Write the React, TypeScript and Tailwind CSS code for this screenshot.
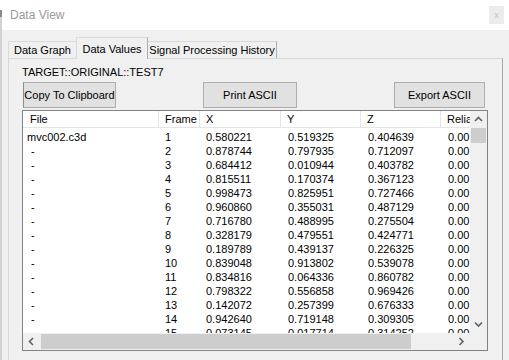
import React from "react";

const rows: [string, string, string, string, string][] = [
  ["mvc002.c3d", "1", "0.580221", "0.519325", "0.404639"],
  ["-", "2", "0.878744", "0.797935", "0.712097"],
  ["-", "3", "0.684412", "0.010944", "0.403782"],
  ["-", "4", "0.815511", "0.170374", "0.367123"],
  ["-", "5", "0.998473", "0.825951", "0.727466"],
  ["-", "6", "0.960860", "0.355031", "0.487129"],
  ["-", "7", "0.716780", "0.488995", "0.275504"],
  ["-", "8", "0.328179", "0.479551", "0.424771"],
  ["-", "9", "0.189789", "0.439137", "0.226325"],
  ["-", "10", "0.839048", "0.913802", "0.539078"],
  ["-", "11", "0.834816", "0.064336", "0.860782"],
  ["-", "12", "0.798322", "0.556858", "0.969426"],
  ["-", "13", "0.142072", "0.257399", "0.676333"],
  ["-", "14", "0.942640", "0.719148", "0.309305"],
  ["-", "15", "0.073145", "0.017714", "0.314252"],
];

const Chev = ({ dir }: { dir: "up" | "down" | "left" | "right" }) => {
  const d =
    dir === "up"
      ? "M1 5 L4.5 1.5 L8 5"
      : dir === "down"
      ? "M1 1.5 L4.5 5 L8 1.5"
      : dir === "left"
      ? "M5 1 L1.5 4.5 L5 8"
      : "M1.5 1 L5 4.5 L1.5 8";
  const horiz = dir === "up" || dir === "down";
  return (
    <svg width={horiz ? 9 : 7} height={horiz ? 7 : 9} viewBox={horiz ? "0 0 9 7" : "0 0 7 9"}>
      <path d={d} stroke="#606060" strokeWidth="1.6" fill="none" />
    </svg>
  );
};

export default function App() {
  return (
    <div
      className="w-[509px] h-[360px] bg-[#f0f0f0] flex overflow-hidden text-[11px] text-black"
      style={{ fontFamily: '"Liberation Sans", Arial, sans-serif' }}
    >
      <div className="w-[2px] bg-[#d2d2d2] flex flex-col">
        <div className="h-[10px] bg-white" />
        <div className="h-[7px] bg-[#8a8a8a]" />
      </div>
      <div className="flex-1 flex flex-col">
        {/* title bar */}
        <div className="h-[30px] bg-white flex items-center pl-[8px]">
          <span className="text-[12px] text-[#9a9a9a]">Data View</span>
          <div className="ml-auto mr-[5px] w-[15px] h-[18px] bg-[#ececec] flex items-center justify-center text-[9px] text-[#c4c4c4] leading-none">
            x
          </div>
        </div>
        {/* body */}
        <div className="flex-1 flex flex-col pl-[6px] pr-[6px]">
          {/* tabs */}
          <div className="h-[28px] flex items-end">
            <div className="h-[17px] w-[68px] border-t border-l border-[#d9d9d9] flex items-center justify-center">
              Data Graph
            </div>
            <div className="relative z-10 -mb-px h-[22px] w-[72px] border-t border-l border-r border-[#adadad] border-l-[#d9d9d9] border-t-[#d9d9d9] bg-[#f0f0f0] flex items-start justify-center pt-[3px]">
              Data Values
            </div>
            <div className="h-[17px] w-[129px] border-t border-r border-[#d9d9d9] border-r-[#adadad] flex items-center justify-center">
              Signal Processing History
            </div>
          </div>
          {/* panel */}
          <div className="flex-1 border-t border-l border-r border-[#d9d9d9] border-r-[#a8a8a8] flex flex-col pl-[13px]">
            <div className="mt-[6px] h-[14px] leading-[14px]">TARGET::ORIGINAL::TEST7</div>
            <div className="mt-[3px] flex h-[26px]">
              <div className="ml-[1px] w-[93px] h-[26px] border border-[#adadad] border-l-[#8c8c8c] bg-[#e1e1e1] flex items-center justify-center">
                Copy To Clipboard
              </div>
              <div className="ml-[87px] w-[94px] h-[26px] border border-[#adadad] bg-[#e1e1e1] flex items-center justify-center">
                Print ASCII
              </div>
              <div className="ml-[97px] w-[91px] h-[26px] border border-[#adadad] bg-[#e1e1e1] flex items-center justify-center">
                Export ASCII
              </div>
            </div>
            {/* list view */}
            <div className="mt-[2px] w-[466px] h-[241px] border border-[#828282] bg-white flex flex-col">
              <div className="h-[222px] flex">
                <div className="w-[447px] overflow-hidden flex flex-col">
                  <div className="h-[17px] flex border-b border-[#e5e5e5] leading-[16px] shrink-0">
                    <div className="w-[136px] shrink-0 border-r border-[#e5e5e5] pl-[7px]">File</div>
                    <div className="w-[41px] shrink-0 border-r border-[#e5e5e5] pl-[6px]">Frame</div>
                    <div className="w-[81px] shrink-0 border-r border-[#e5e5e5] pl-[6px]">X</div>
                    <div className="w-[80px] shrink-0 border-r border-[#e5e5e5] pl-[6px]">Y</div>
                    <div className="w-[80px] shrink-0 border-r border-[#e5e5e5] pl-[6px]">Z</div>
                    <div className="w-[29px] shrink-0 pl-[6px] overflow-hidden whitespace-nowrap">Relia</div>
                  </div>
                  <div className="pt-[2px] flex flex-col">
                    {rows.map((r, i) => (
                      <div key={i} className="h-[14px] leading-[14px] flex shrink-0 whitespace-nowrap">
                        <div className={`w-[136px] shrink-0 ${r[0] === "-" ? "pl-[8px]" : "pl-[4px]"}`}>{r[0]}</div>
                        <div className="w-[41px] shrink-0 pl-[6px]">{r[1]}</div>
                        <div className="w-[81px] shrink-0 pl-[6px]">{r[2]}</div>
                        <div className="w-[80px] shrink-0 pl-[7px]">{r[3]}</div>
                        <div className="w-[80px] shrink-0 pl-[7px]">{r[4]}</div>
                        <div className="w-[29px] shrink-0 pl-[7px]">0.00</div>
                      </div>
                    ))}
                  </div>
                </div>
                {/* vertical scrollbar */}
                <div className="w-[17px] bg-[#f0f0f0] flex flex-col">
                  <div className="h-[17px] flex items-center justify-center">
                    <Chev dir="up" />
                  </div>
                  <div className="mx-[1px] h-[15px] bg-[#cdcdcd]" />
                  <div className="flex-1" />
                  <div className="h-[17px] flex items-center justify-center">
                    <Chev dir="down" />
                  </div>
                </div>
              </div>
              {/* horizontal scrollbar */}
              <div className="h-[17px] flex">
                <div className="w-[447px] bg-[#f0f0f0] flex items-center">
                  <div className="w-[17px] h-[17px] flex items-center justify-center">
                    <Chev dir="left" />
                  </div>
                  <div className="ml-[1px] w-[370px] h-[15px] bg-[#cdcdcd]" />
                  <div className="flex-1" />
                  <div className="w-[17px] h-[17px] flex items-center justify-center">
                    <Chev dir="right" />
                  </div>
                </div>
                <div className="w-[17px] bg-[#f0f0f0]" />
              </div>
            </div>
          </div>
        </div>
      </div>
    </div>
  );
}
